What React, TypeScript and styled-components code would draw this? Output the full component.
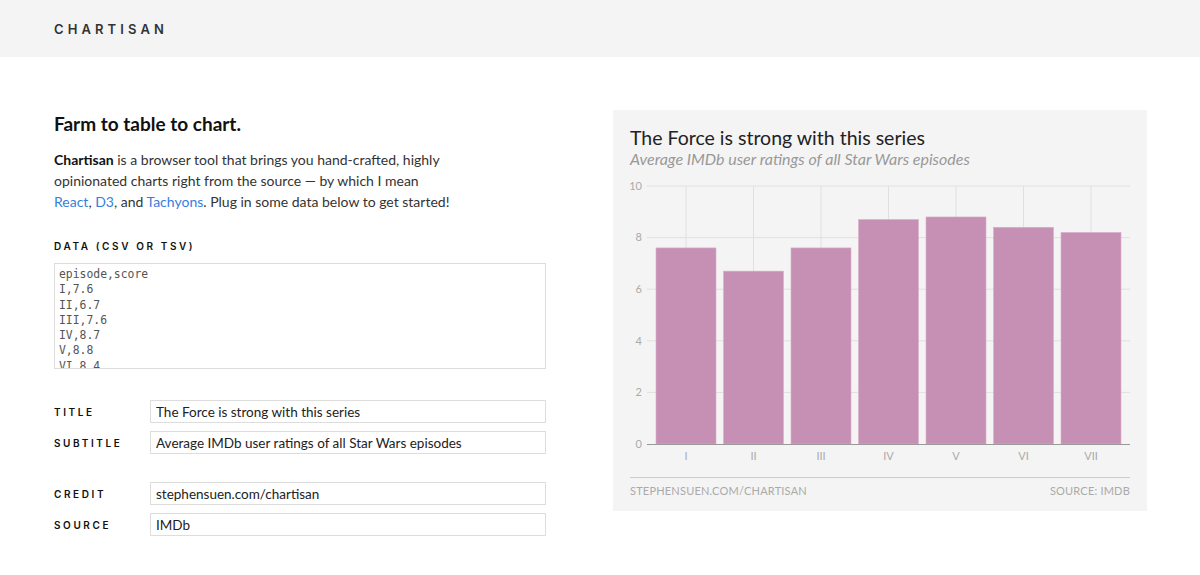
import React from "react";
import styled, { createGlobalStyle } from "styled-components";

const Global = createGlobalStyle`
  html, body { margin: 0; padding: 0; background: #fff; }
  body { font-family: Lato, "Noto Sans", sans-serif; color: #222; }
  * { box-sizing: border-box; }
`;

const Header = styled.header`
  height: 57px;
  background: #f4f4f4;
  display: flex;
  align-items: center;
  padding-left: 54px;
`;

const Brand = styled.div`
  font-family: Inter, "Noto Sans", sans-serif;
  font-size: 13px;
  font-weight: 600;
  letter-spacing: 4.1px;
  color: #333;
`;

const Main = styled.main`
  display: grid;
  grid-template-columns: 492px 534px;
  column-gap: 67px;
  padding: 53px 0 0 54px;
`;

const Left = styled.section`
  display: flex;
  flex-direction: column;
  padding-top: 2px;
`;

const Heading = styled.h1`
  margin: 0;
  font-size: 19px;
  font-weight: 700;
  color: #111;
  line-height: 24px;
`;

const Para = styled.p`
  margin: 13px 0 0;
  font-size: 14px;
  line-height: 21px;
  color: #333;
  strong { font-weight: 700; color: #111; }
`;

const Link = styled.a`
  color: #357edd;
  text-decoration: none;
`;

const Label = styled.label`
  font-family: Inter, "Noto Sans", sans-serif;
  font-size: 10px;
  font-weight: 600;
  letter-spacing: 2.6px;
  color: #111;
  text-transform: uppercase;
`;

const DataLabel = styled(Label)`
  display: block;
  margin-top: 28px;
  line-height: 12px;
`;

const DataArea = styled.textarea`
  display: block;
  margin-top: 11px;
  width: 492px;
  height: 106px;
  border: 1px solid #ddd;
  padding: 3px 4px;
  font-family: "DejaVu Sans Mono", "Liberation Mono", monospace;
  font-size: 11.4px;
  line-height: 15.3px;
  color: #555;
  resize: none;
  overflow: hidden;
  outline: none;
`;

const FieldGroup = styled.div<{ $top: number }>`
  display: flex;
  flex-direction: column;
  gap: 8px;
  margin-top: ${(p) => p.$top}px;
`;

const FieldRow = styled.div`
  display: grid;
  grid-template-columns: 96px 396px;
  align-items: center;
`;

const TextInput = styled.input`
  height: 23px;
  width: 396px;
  border: 1px solid #ddd;
  padding: 0 5px;
  font-family: Lato, "Noto Sans", sans-serif;
  font-size: 13.5px;
  color: #222;
  outline: none;
`;

const Panel = styled.section`
  background: #f4f4f4;
  padding: 16px 17px 17px;
  height: 401px;
  display: flex;
  flex-direction: column;
`;

const ChartTitle = styled.div`
  font-size: 19.5px;
  line-height: 24px;
  color: #222;
`;

const ChartSub = styled.div`
  font-size: 16px;
  font-style: italic;
  line-height: 18px;
  color: #999;
`;

const Svg = styled.svg`
  display: block;
  margin-top: 6px;
  overflow: visible;
`;

const Footer = styled.div`
  margin-top: 11px;
  border-top: 1px solid #ccc;
  padding-top: 6px;
  display: flex;
  justify-content: space-between;
  font-size: 11px;
  color: #aaa;
  text-transform: uppercase;
  letter-spacing: 0.2px;
`;

const data = [
  { episode: "I", score: 7.6 },
  { episode: "II", score: 6.7 },
  { episode: "III", score: 7.6 },
  { episode: "IV", score: 8.7 },
  { episode: "V", score: 8.8 },
  { episode: "VI", score: 8.4 },
  { episode: "VII", score: 8.2 },
];

const csv = "episode,score\n" + data.map((d) => `${d.episode},${d.score}`).join("\n");

const Chart: React.FC = () => {
  const base = 270;
  const k = 25.8;
  const y = (v: number) => base - v * k;
  const cx = (i: number) => 56 + i * 67.5;
  return (
    <Svg width={500} height={292} viewBox="0 0 500 292">
      {[10, 8, 6, 4, 2].map((t) => (
        <line key={t} x1={17} x2={500} y1={y(t)} y2={y(t)} stroke="#e0e0e0" strokeWidth={1} />
      ))}
      {data.map((d, i) => (
        <line key={d.episode} x1={cx(i)} x2={cx(i)} y1={y(10)} y2={base} stroke="#e0e0e0" strokeWidth={1} />
      ))}
      {data.map((d, i) => (
        <rect
          key={"b" + d.episode}
          x={cx(i) - 30}
          y={y(d.score)}
          width={60}
          height={d.score * k}
          fill="#c690b4"
          stroke="#d9aecb"
          strokeWidth={0.6}
        />
      ))}
      <line x1={17} x2={500} y1={base + 0.5} y2={base + 0.5} stroke="#999" strokeWidth={1} />
      {[10, 8, 6, 4, 2, 0].map((t) => (
        <text key={"t" + t} x={12} y={y(t)} dy="0.35em" textAnchor="end" fontSize={11} fill="#aaa" fontFamily="Lato, sans-serif">
          {t}
        </text>
      ))}
      {data.map((d, i) => (
        <text key={"x" + d.episode} x={cx(i)} y={282} dy="0.35em" textAnchor="middle" fontSize={11} fill="#aaa" fontFamily="Lato, sans-serif">
          {d.episode}
        </text>
      ))}
    </Svg>
  );
};

export default function App() {
  return (
    <>
      <Global />
      <Header>
        <Brand>CHARTISAN</Brand>
      </Header>
      <Main>
        <Left>
          <Heading>Farm to table to chart.</Heading>
          <Para>
            <strong>Chartisan</strong> is a browser tool that brings you hand-crafted, highly
            <br />
            opinionated charts right from the source — by which I mean
            <br />
            <Link href="#">React</Link>, <Link href="#">D3</Link>, and <Link href="#">Tachyons</Link>. Plug in some data below to get started!
          </Para>
          <DataLabel>Data (CSV or TSV)</DataLabel>
          <DataArea defaultValue={csv} spellCheck={false} />
          <FieldGroup $top={31}>
            <FieldRow>
              <Label>Title</Label>
              <TextInput defaultValue="The Force is strong with this series" />
            </FieldRow>
            <FieldRow>
              <Label>Subtitle</Label>
              <TextInput defaultValue="Average IMDb user ratings of all Star Wars episodes" />
            </FieldRow>
          </FieldGroup>
          <FieldGroup $top={28}>
            <FieldRow>
              <Label>Credit</Label>
              <TextInput defaultValue="stephensuen.com/chartisan" />
            </FieldRow>
            <FieldRow>
              <Label>Source</Label>
              <TextInput defaultValue="IMDb" />
            </FieldRow>
          </FieldGroup>
        </Left>
        <Panel>
          <ChartTitle>The Force is strong with this series</ChartTitle>
          <ChartSub>Average IMDb user ratings of all Star Wars episodes</ChartSub>
          <Chart />
          <Footer>
            <span>stephensuen.com/chartisan</span>
            <span>Source: IMDb</span>
          </Footer>
        </Panel>
      </Main>
    </>
  );
}
